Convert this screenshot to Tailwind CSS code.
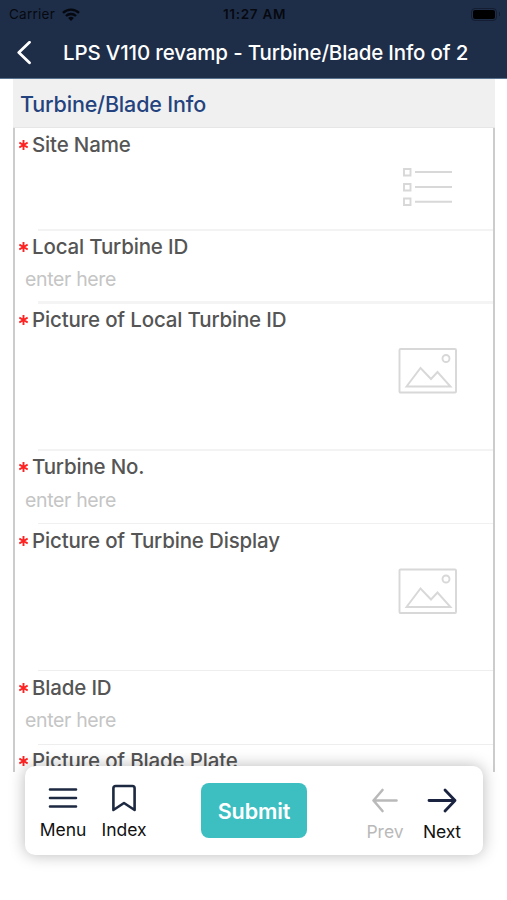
<!DOCTYPE html>
<html lang="en">
<head>
<meta charset="utf-8">
<title>Turbine/Blade Info</title>
<script src="https://cdn.jsdelivr.net/npm/@tailwindcss/browser@4"></script>
</head>
<body class="relative h-[900px] w-[507px] overflow-hidden bg-white font-['Inter','Liberation_Sans',sans-serif] whitespace-nowrap">
<header class="flex h-[79px] flex-col border-b border-[#57718e] bg-[#1e2d48]">
  <div class="grid h-[27px] grid-cols-3 items-center pt-px pr-[7px] pl-[9px] text-[13.5px] text-black/80">
    <div class="flex items-center gap-[7px]"><span class="tracking-[0.25px]">Carrier</span>
      <svg class="h-[13px] w-[18px]" viewBox="0 0 18 13"><g fill="none" stroke="#05080e" stroke-width="2.4"><path d="M1 4.9a11.5 11.5 0 0 1 16 0"/><path d="M4 8a7.2 7.2 0 0 1 10 0"/></g><path d="M6.2 10a4 4 0 0 1 5.6 0L9 13z" fill="#05080e"/></svg></div>
    <div class="text-center font-semibold tracking-[0.7px]">11:27 AM</div>
    <div class="flex items-center justify-end gap-[2px]"><span class="rounded-[4px] border border-[#141d31] p-px"><span class="block h-[9px] w-[22px] rounded-[2px] bg-black"></span></span><span class="h-[4px] w-px bg-[#141d31]"></span></div>
  </div>
  <div class="flex h-[51px] items-center pl-[17px] text-white">
    <svg class="h-[24px] w-[15px]" viewBox="0 0 15 24" fill="none" stroke="white" stroke-width="2.8" stroke-linecap="round" stroke-linejoin="round"><path d="M12.5 1.3 1.8 11.500l10.700 10.200"/></svg>
    <h1 class="ml-[31px] pt-[2px] text-[20.5px] font-medium tracking-[-0.15px]">LPS V110 revamp - Turbine/Blade Info of 2</h1>
  </div>
</header>
<main class="mr-[12px] ml-[13px] h-[693px] overflow-hidden text-[20.5px] leading-[24px] font-medium tracking-[-0.17px] text-[#555]">
  <h2 class="flex h-[49px] items-center border-b border-[#e6e6e6] bg-[#f0f0f0] pt-px pl-[7px] text-[21.5px] text-[#24437e]">Turbine/Blade Info</h2>
  <div class="h-[644px] overflow-hidden border-x-2 border-[#ccc]">
    <section class="flex h-[103px] flex-col pt-[5px]">
      <div class="flex items-center pl-[4px]"><svg class="mr-[4px] h-[10px] w-[9px]" viewBox="0 0 9 10" stroke="#f22" stroke-width="1.9"><path d="M4.5 0v10M.3 2.6l8.4 4.8M8.7 2.6.3 7.4"/></svg><span>Site Name</span></div>
      <svg class="mt-[10px] ml-[387px] h-[40px] w-[51px]" viewBox="0 0 51 40" fill="none" stroke="#d8d8d8" stroke-width="1.9"><path d="M2 2h6.5v6.5H2zM2 17h6.5v6.5H2zM2 31.5h6.5V38H2zM13 5h37M13 20h37M13 34.800h37"/></svg>
      <div class="mt-auto ml-[23px] h-[2px] bg-[#f3f3f3]"></div>
    </section>
    <section class="flex h-[73px] flex-col pt-[4px]">
      <div class="flex items-center pl-[4px]"><svg class="mr-[4px] h-[10px] w-[9px]" viewBox="0 0 9 10" stroke="#f22" stroke-width="1.9"><path d="M4.5 0v10M.3 2.6l8.4 4.8M8.7 2.6.3 7.4"/></svg><span>Local Turbine ID</span></div>
      <div class="mt-[8px] pl-[10px] text-[19.5px] font-normal tracking-[-0.35px] text-[#c5c5c5]">enter here</div>
      <div class="mt-auto ml-[23px] h-[3px] bg-[#f4f4f4]"></div>
    </section>
    <section class="flex h-[147px] flex-col pt-[4px]">
      <div class="flex items-center pl-[4px]"><svg class="mr-[4px] h-[10px] w-[9px]" viewBox="0 0 9 10" stroke="#f22" stroke-width="1.9"><path d="M4.5 0v10M.3 2.6l8.4 4.8M8.7 2.6.3 7.4"/></svg><span>Picture of Local Turbine ID</span></div>
      <svg class="mt-[15px] ml-[382.500px] h-[47px] w-[60px]" viewBox="0 0 60 47" fill="none" stroke="#d8d8d8" stroke-width="1.9"><rect x="1.500" y="2" width="56.500" height="43.500" rx="1"/><circle cx="48" cy="11.500" r="3.500"/><path d="M8.500 39.500 22.500 21l10.500 11 6.500-7 13 14.500z"/></svg>
      <div class="mt-auto ml-[23px] h-[2px] bg-[#f3f3f3]"></div>
    </section>
    <section class="flex h-[73px] flex-col pt-[4px]">
      <div class="flex items-center pl-[4px]"><svg class="mr-[4px] h-[10px] w-[9px]" viewBox="0 0 9 10" stroke="#f22" stroke-width="1.9"><path d="M4.5 0v10M.3 2.6l8.4 4.8M8.7 2.6.3 7.4"/></svg><span>Turbine No.</span></div>
      <div class="mt-[9px] pl-[10px] text-[19.5px] font-normal tracking-[-0.35px] text-[#c5c5c5]">enter here</div>
      <div class="mt-auto ml-[23px] h-px bg-[#f0f0f0]"></div>
    </section>
    <section class="flex h-[147px] flex-col pt-[5px]">
      <div class="flex items-center pl-[4px]"><svg class="mr-[4px] h-[10px] w-[9px]" viewBox="0 0 9 10" stroke="#f22" stroke-width="1.9"><path d="M4.5 0v10M.3 2.6l8.4 4.8M8.7 2.6.3 7.4"/></svg><span>Picture of Turbine Display</span></div>
      <svg class="mt-[15px] ml-[382.500px] h-[47px] w-[60px]" viewBox="0 0 60 47" fill="none" stroke="#d8d8d8" stroke-width="1.9"><rect x="1.500" y="1.500" width="56.500" height="43.500" rx="1"/><circle cx="48" cy="11" r="3.500"/><path d="M8.500 39 22.500 20.500l10.500 11 6.500-7 13 14.500z"/></svg>
      <div class="mt-auto ml-[23px] h-px bg-[#eee]"></div>
    </section>
    <section class="flex h-[74px] flex-col pt-[5px]">
      <div class="flex items-center pl-[4px]"><svg class="mr-[4px] h-[10px] w-[9px]" viewBox="0 0 9 10" stroke="#f22" stroke-width="1.9"><path d="M4.5 0v10M.3 2.6l8.4 4.8M8.7 2.6.3 7.4"/></svg><span>Blade ID</span></div>
      <div class="mt-[8px] pl-[10px] text-[19.5px] font-normal tracking-[-0.35px] text-[#c5c5c5]">enter here</div>
      <div class="mt-auto ml-[23px] h-px bg-[#eee]"></div>
    </section>
    <section class="flex h-[74px] flex-col pt-[4px]">
      <div class="flex items-center pl-[4px]"><svg class="mr-[4px] h-[10px] w-[9px]" viewBox="0 0 9 10" stroke="#f22" stroke-width="1.9"><path d="M4.5 0v10M.3 2.6l8.4 4.8M8.7 2.6.3 7.4"/></svg><span>Picture of Blade Plate</span></div>
    </section>
  </div>
</main>
<nav class="absolute top-[766px] left-[25px] flex h-[89px] w-[458px] rounded-[10px] bg-white text-[17.5px] leading-[20px] text-[#111] shadow-[0_0_16px_rgba(0,0,0,0.28)]">
  <div class="ml-[8px] flex w-[60px] flex-col items-center pt-[18px]">
    <svg class="h-[28px] w-[30px]" viewBox="0 0 30 28" fill="none" stroke="#1c2940" stroke-width="2.6" stroke-linecap="round"><path d="M2 5.500h26M2 14h26M2 22.500h26"/></svg>
    <span class="mt-[8px]">Menu</span>
  </div>
  <div class="ml-px flex w-[60px] flex-col items-center pt-[18px]">
    <svg class="h-[28px] w-[26px]" viewBox="0 0 26 28" fill="none" stroke="#1c2940" stroke-width="2.600" stroke-linejoin="round"><path d="M2.400 26V4.200Q2.400 2 4.600 2h16.800q2.200 0 2.200 2.200V26L13 19z"/></svg>
    <span class="mt-[8px]">Index</span>
  </div>
  <button class="mt-[17px] ml-[47px] h-[55px] w-[106px] rounded-[8px] bg-[#3dbfc2] text-[21.5px] font-semibold tracking-[-0.1px] text-white">Submit</button>
  <div class="ml-[48px] flex w-[60px] flex-col items-center pt-[20px]">
    <svg class="h-[28px] w-[28px]" viewBox="0 0 28 28" fill="none" stroke="#b9b9b9" stroke-width="2.600" stroke-linecap="round" stroke-linejoin="round"><path d="M25.500 14.500H2.500M11.500 4 2.500 14.500 11.500 25"/></svg>
    <span class="mt-[8px] text-[#b9b9b9]">Prev</span>
  </div>
  <div class="-ml-[3px] flex w-[60px] flex-col items-center pt-[20px]">
    <svg class="h-[28px] w-[30px]" viewBox="0 0 30 28" fill="none" stroke="#1a2340" stroke-width="2.800" stroke-linecap="round" stroke-linejoin="round"><path d="M2 14.500h26M18 4l10 10.500L18 25"/></svg>
    <span class="mt-[8px] tracking-[-0.2px]">Next</span>
  </div>
</nav>
</body>
</html>
